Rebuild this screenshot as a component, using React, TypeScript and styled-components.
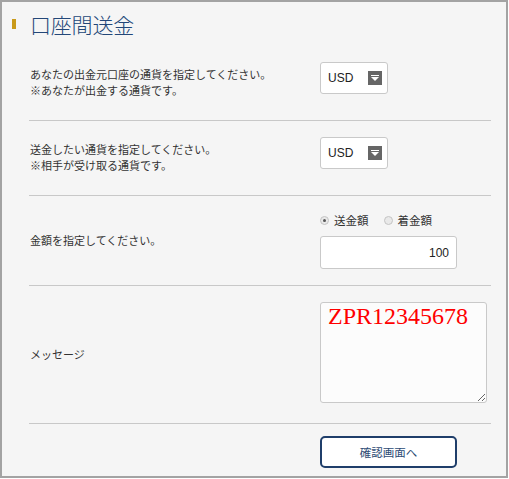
import React from 'react';
import styled, { createGlobalStyle } from 'styled-components';

const GlobalStyle = createGlobalStyle`
	body {
		margin: 0;
		background: #ffffff;
		font-family: 'Liberation Sans', 'Noto Sans CJK JP', sans-serif;
	}
`;

const Frame = styled.div`
	box-sizing: border-box;
	width: 508px;
	height: 478px;
	border: 2px solid #a3a3a3;
	background: #f5f5f5;
	padding: 0 15px 0 10px;
`;

const Header = styled.div`
	display: flex;
	align-items: center;
	gap: 14px;
	height: 44px;
`;

const TitleBar = styled.span`
	display: block;
	width: 4px;
	height: 10px;
	background: #c99a1a;
`;

const Title = styled.h1`
	margin: 0;
	font-family: 'Noto Sans CJK JP', sans-serif;
	font-size: 21px;
	font-weight: 300;
	color: #234778;
	letter-spacing: -0.2px;
`;

const Form = styled.div`
	margin-left: 17px;
`;

const Row = styled.div<{ $pb: number }>`
	display: grid;
	grid-template-columns: 291px 1fr;
	border-bottom: 1px solid #c8c8c8;

	& > div:last-child {
		padding: 16px 0 ${p => p.$pb}px;
	}
`;

const Label = styled.div`
	display: flex;
	align-items: center;
	padding-left: 1px;
	font-size: 11px;
	line-height: 16px;
	color: #333;
`;

const Controls = styled.div`
	display: flex;
	flex-direction: column;
	align-items: flex-start;
`;

const Select = styled.div`
	box-sizing: border-box;
	display: flex;
	align-items: center;
	justify-content: space-between;
	width: 68px;
	height: 32px;
	padding: 0 5px 0 7px;
	border: 1px solid #c9c9c9;
	border-radius: 3px;
	background: #fff;
	font-size: 12px;
	color: #222;
`;

const Arrow = styled.span`
	display: flex;
	align-items: center;
	justify-content: center;
	width: 14px;
	height: 14px;
	background: #666;
`;

const RadioGroup = styled.div`
	display: flex;
	align-items: center;
	gap: 15px;
	height: 16px;
	margin-bottom: 8px;
`;

const RadioLabel = styled.label`
	display: flex;
	align-items: center;
	gap: 5px;
	font-family: 'Noto Sans CJK JP', sans-serif;
	font-size: 11.5px;
	color: #333;
`;

const RadioDot = styled.span<{ $checked?: boolean }>`
	box-sizing: border-box;
	display: flex;
	align-items: center;
	justify-content: center;
	width: 9px;
	height: 9px;
	border: 1px solid #c4c4c4;
	border-radius: 50%;
	background: #e9e9e9;

	&::after {
		content: '';
		width: 3px;
		height: 3px;
		border-radius: 50%;
		background: ${p => (p.$checked ? '#555' : 'transparent')};
	}
`;

const AmountInput = styled.input`
	box-sizing: border-box;
	width: 137px;
	height: 33px;
	padding: 0 7px;
	border: 1px solid #c9c9c9;
	border-radius: 3px;
	background: #fff;
	text-align: right;
	font-family: 'Liberation Sans', sans-serif;
	font-size: 12px;
	color: #222;
	outline: none;
`;

const Message = styled.textarea`
	box-sizing: border-box;
	display: block;
	width: 167px;
	height: 101px;
	margin: 0;
	padding: 0 7px;
	border: 1px solid #c9c9c9;
	border-radius: 3px;
	background: #fcfcfc;
	font-family: 'Liberation Serif', serif;
	font-size: 24px;
	color: #ff0000;
	outline: none;
`;

const ButtonRow = styled.div`
	padding: 12px 0 0 291px;
`;

const ConfirmButton = styled.button`
	box-sizing: border-box;
	width: 137px;
	height: 32px;
	border: 2px solid #1f3e6a;
	border-radius: 5px;
	background: #fff;
	font-family: 'Noto Sans CJK JP', sans-serif;
	font-size: 11.5px;
	color: #2d4b74;
	cursor: pointer;
`;

const CurrencySelect = ({ value }: { value: string }) => (
	<Select>
		<span>{value}</span>
		<Arrow>
			<svg width="8" height="6" viewBox="0 0 8 6">
				<rect x="0" y="0" width="8" height="1" fill="#fff" />
				<polygon points="0,2 8,2 4,6" fill="#fff" />
			</svg>
		</Arrow>
	</Select>
);

const App = () => {
	const [mode, setMode] = React.useState('send');

	return (
		<>
			<GlobalStyle />
			<Frame>
				<Header>
					<TitleBar />
					<Title>口座間送金</Title>
				</Header>
				<Form>
					<Row $pb={26}>
						<Label>
							あなたの出金元口座の通貨を指定してください。
							<br />
							※あなたが出金する通貨です。
						</Label>
						<Controls>
							<CurrencySelect value="USD" />
						</Controls>
					</Row>
					<Row $pb={26}>
						<Label>
							送金したい通貨を指定してください。
							<br />
							※相手が受け取る通貨です。
						</Label>
						<Controls>
							<CurrencySelect value="USD" />
						</Controls>
					</Row>
					<Row $pb={16}>
						<Label>金額を指定してください。</Label>
						<Controls>
							<RadioGroup>
								<RadioLabel onClick={() => setMode('send')}>
									<RadioDot $checked={mode === 'send'} />
									送金額
								</RadioLabel>
								<RadioLabel onClick={() => setMode('receive')}>
									<RadioDot $checked={mode === 'receive'} />
									着金額
								</RadioLabel>
							</RadioGroup>
							<AmountInput defaultValue="100" />
						</Controls>
					</Row>
					<Row $pb={20}>
						<Label>メッセージ</Label>
						<Controls>
							<Message defaultValue="ZPR12345678" />
						</Controls>
					</Row>
					<ButtonRow>
						<ConfirmButton>確認画面へ</ConfirmButton>
					</ButtonRow>
				</Form>
			</Frame>
		</>
	);
};

export default App;
